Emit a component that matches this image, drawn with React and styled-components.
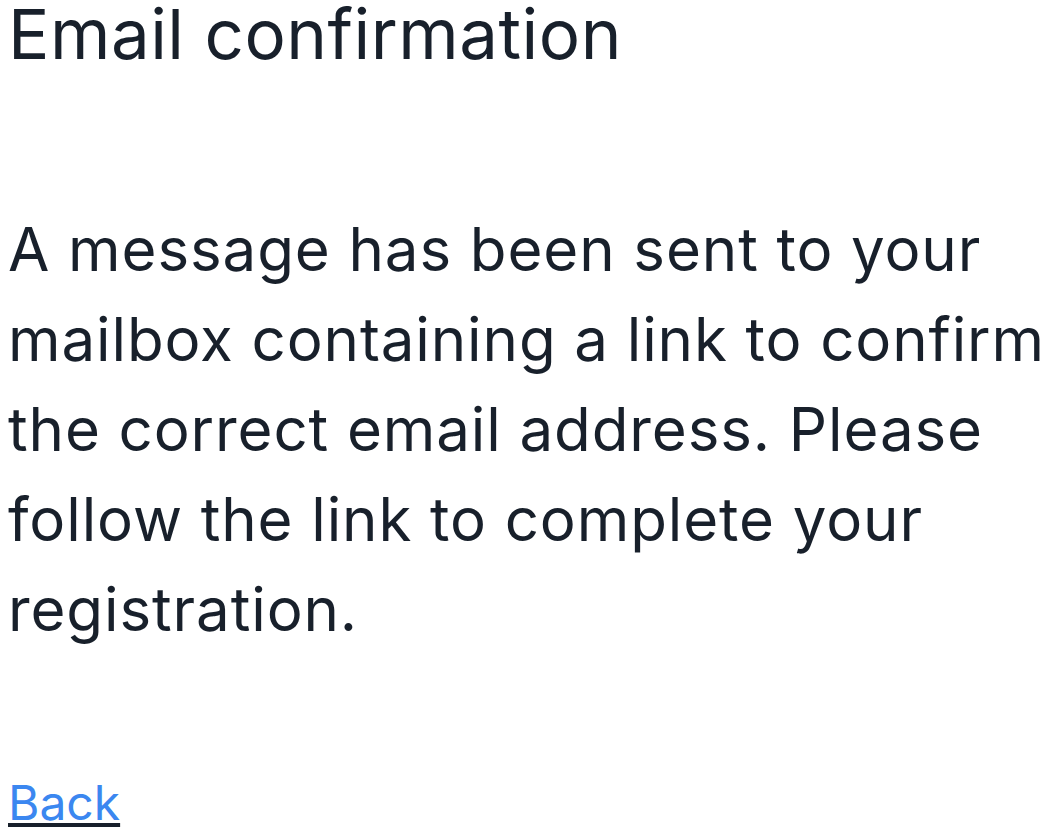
import React from "react";
import styled, { createGlobalStyle } from "styled-components";

const GlobalStyle = createGlobalStyle`
  body {
    margin: 0;
    background: #ffffff;
    font-family: Inter, "Noto Sans", sans-serif;
    color: #18202b;
  }
`;

const Page = styled.div`
  padding: 0 0 0 8px;
  display: flex;
  flex-direction: column;
  align-items: flex-start;
`;

const Title = styled.h1`
  margin: 0;
  font-size: 69px;
  font-weight: 400;
  line-height: 1;
  letter-spacing: 0.5px;
`;

const Message = styled.p`
  margin: 135px 0 0;
  font-size: 60px;
  line-height: 90px;
  letter-spacing: 0.9px;
`;

const BackLink = styled.a`
  margin-top: 113px;
  font-size: 48px;
  line-height: 72px;
  color: #3b87f0;
  text-decoration: underline;
  text-decoration-color: #18202b;
`;

function App() {
  return (
    <>
      <GlobalStyle />
      <Page>
        <Title>Email confirmation</Title>
        <Message>
          A message has been sent to your mailbox containing a link to confirm
          the correct email address. Please follow the link to complete your
          registration.
        </Message>
        <BackLink href="#">Back</BackLink>
      </Page>
    </>
  );
}

export default App;
